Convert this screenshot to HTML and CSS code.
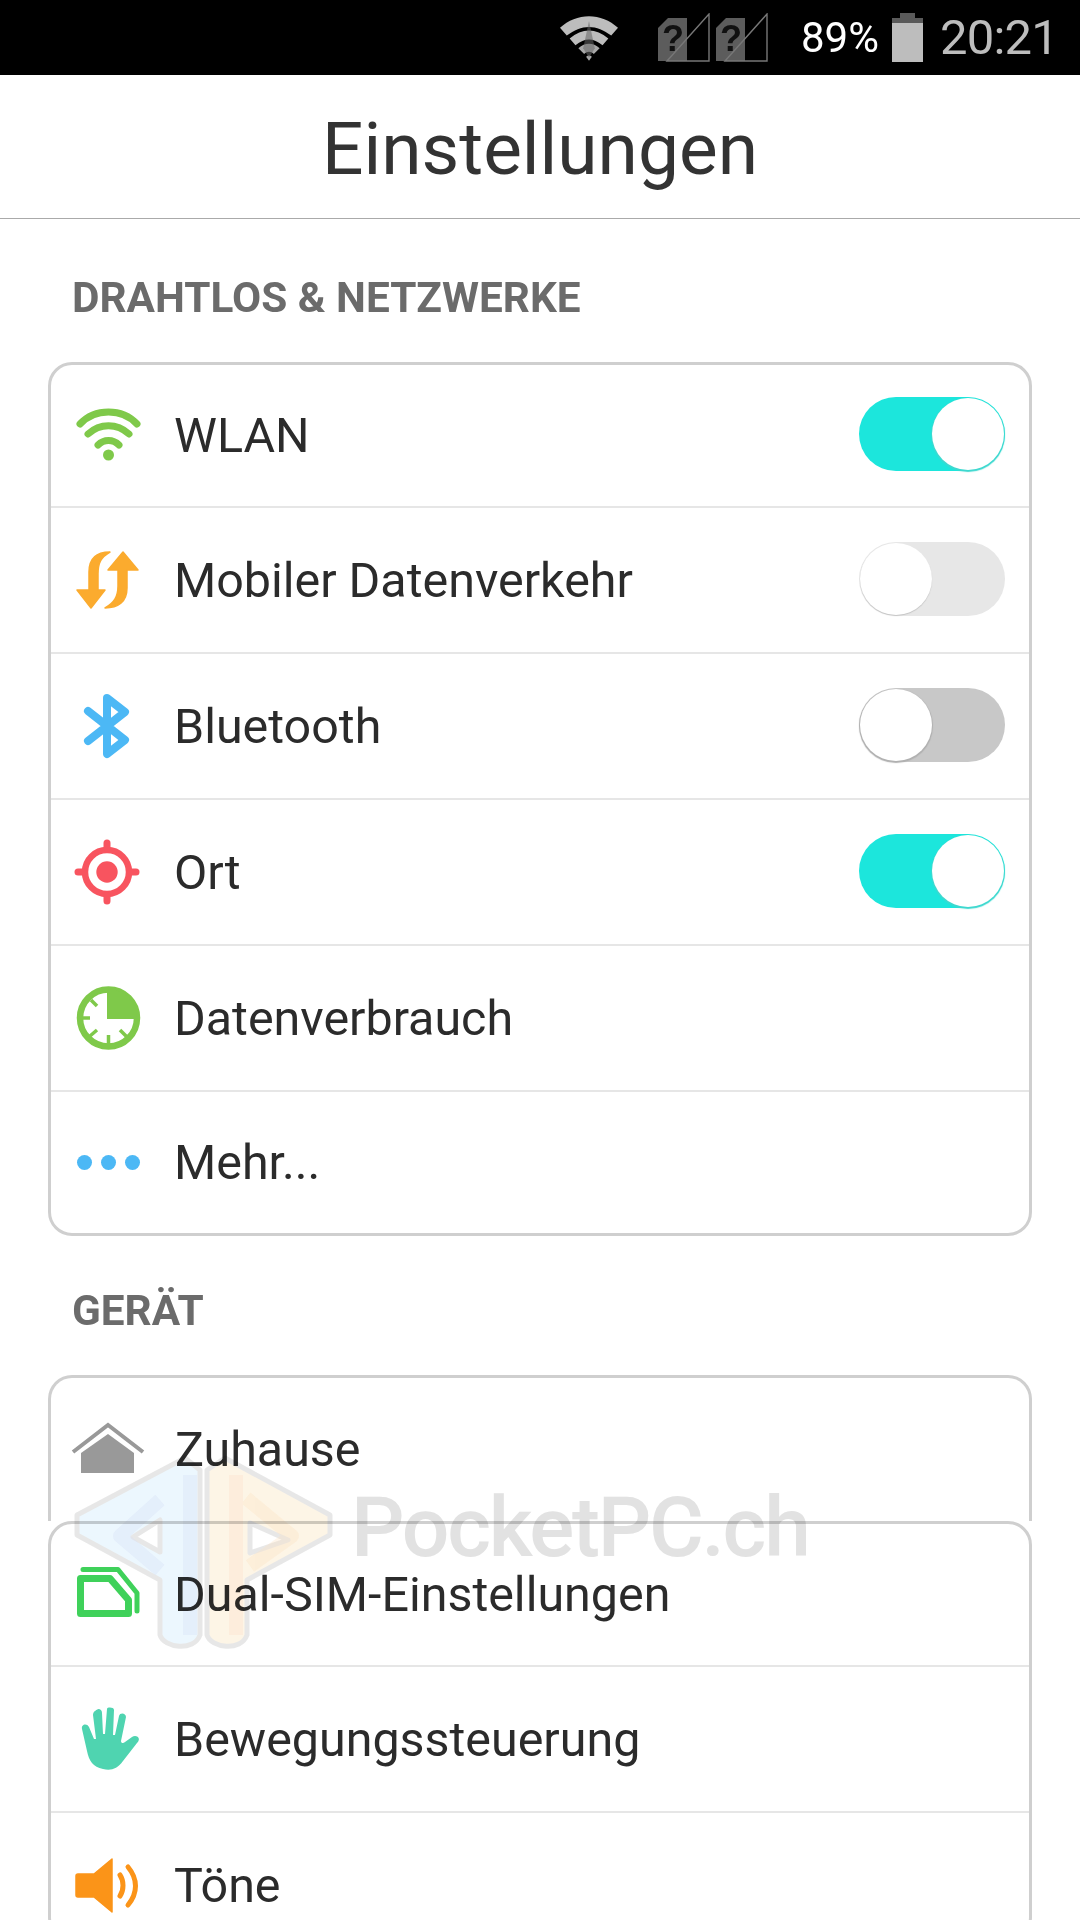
FILE: index.html
```html
<!DOCTYPE html>
<html lang="de">
<head>
    <meta charset="UTF-8">
    <meta name="viewport" content="width=device-width, initial-scale=1.0">
    <title>Einstellungen</title>
    <link rel="stylesheet" href="styles.css">
</head>
<body>
    <div class="statusBar">
        <svg class="statusWifi" viewBox="0 0 60 47">
            <path d="M0 13C17 -3 43 -3 60 13L53 21C38 9 22 9 7 21Z" fill="#bdbdbd"/>
            <path d="M10 24C23 13 37 13 50 24L44 31C34 23 26 23 16 31Z" fill="#bdbdbd"/>
            <path d="M19 34C26 28 34 28 41 34L35 40C32 37 28 37 25 40Z" fill="#a8a8a8"/>
            <path d="M27 43C29 41 31 41 33 43L30 47Z" fill="#a8a8a8"/>
            <path d="M30 6L36 34L30 44L24 34Z" fill="#666" opacity="0.55"/>
        </svg>
        <svg class="statusSim" viewBox="0 0 52 49">
            <path d="M10 5H29V48H0V15Z" fill="#5c5c5c"/>
            <path d="M9 48L51 1V48Z" fill="none" stroke="#777" stroke-width="1.4"/>
            <text x="4" y="38" class="simMark">?</text>
        </svg>
        <svg class="statusSim" viewBox="0 0 52 49">
            <path d="M10 5H29V48H0V15Z" fill="#5c5c5c"/>
            <path d="M9 48L51 1V48Z" fill="none" stroke="#777" stroke-width="1.4"/>
            <text x="4" y="38" class="simMark">?</text>
        </svg>
        <span class="statusPercent">89%</span>
        <svg class="statusBattery" viewBox="0 0 31 49">
            <path d="M8 0H23V5H31V49H0V5H8Z" fill="#bdbdbd"/>
            <path d="M8 0H23V5H31V10H0V5H8Z" fill="#5a5a5a"/>
        </svg>
        <span class="statusTime">20:21</span>
    </div>

    <div class="titleBar">Einstellungen</div>

    <div class="screen">
        <h2 class="sectionLabel">DRAHTLOS &amp; NETZWERKE</h2>
        <div class="card">
            <div class="row">
                <svg class="rowIcon" viewBox="0 0 64 64">
                    <g fill="none" stroke="#7fc94a" stroke-width="7" stroke-linecap="round">
                        <path d="M5 20C20 4 47 4 62 20"/>
                        <path d="M13 30C25 19 42 19 54 30"/>
                        <path d="M23 41C29 35 38 35 44 41"/>
                    </g>
                    <circle cx="33.5" cy="51" r="5.5" fill="#7fc94a"/>
                </svg>
                <span class="rowText">WLAN</span>
                <div class="toggle toggleOn"><div class="knob"></div></div>
            </div>
            <div class="row">
                <svg class="rowIcon" viewBox="0 0 64 64">
                    <g fill="#fbab2e" stroke="#fbab2e" stroke-width="1.5" stroke-linejoin="round">
                        <path d="M35 4C22 4 14 10 14 24V42H2L16 60L30 42H23V26C23 15 26 9 35 4Z"/>
                        <path d="M30 60C43 60 52 54 52 40V22H63L48 4L33 22H43V38C43 49 39 55 30 60Z"/>
                    </g>
                </svg>
                <span class="rowText">Mobiler Datenverkehr</span>
                <div class="toggle toggleLight"><div class="knob"></div></div>
            </div>
            <div class="row">
                <svg class="rowIcon" viewBox="0 0 64 64">
                    <path d="M13 17L50 46L32 60V4L50 18L13 47" fill="none" stroke="#4cb8f5" stroke-width="8" stroke-linecap="round" stroke-linejoin="round"/>
                </svg>
                <span class="rowText">Bluetooth</span>
                <div class="toggle toggleOff"><div class="knob"></div></div>
            </div>
            <div class="row">
                <svg class="rowIcon" viewBox="0 0 64 64">
                    <circle cx="32" cy="32" r="22" fill="none" stroke="#f8545f" stroke-width="6.5"/>
                    <circle cx="32" cy="32" r="10.7" fill="#f8545f"/>
                    <g stroke="#f8545f" stroke-width="7" stroke-linecap="round">
                        <path d="M32 3V8"/><path d="M32 56V61"/><path d="M3 32H8"/><path d="M56 32H61"/>
                    </g>
                </svg>
                <span class="rowText">Ort</span>
                <div class="toggle toggleOn"><div class="knob"></div></div>
            </div>
            <div class="row">
                <svg class="rowIcon" viewBox="0 0 64 64">
                    <circle cx="33.5" cy="32" r="28.5" fill="none" stroke="#7fc94a" stroke-width="6.5"/>
                    <path d="M32 3A29 29 0 0 1 62 33H32Z" fill="#7fc94a"/>
                    <g stroke="#7fc94a" stroke-width="3.5">
                        <path d="M33.5 49V60"/><path d="M16 14L22 20"/><path d="M52 51L45 44"/><path d="M15 50L22 44"/><path d="M6 32H15"/>
                    </g>
                </svg>
                <span class="rowText">Datenverbrauch</span>
            </div>
            <div class="row">
                <div class="rowDots"><i></i><i></i><i></i></div>
                <span class="rowText">Mehr...</span>
            </div>
        </div>

        <h2 class="sectionLabel">GERÄT</h2>
        <div class="card cardCut">
            <div class="row">
                <svg class="rowIcon iconWide" viewBox="0 0 72 64">
                    <path d="M1 34L36 7L71 34" fill="none" stroke="#999" stroke-width="4"/>
                    <path d="M36 16L62 35V55H9V35Z" fill="#999"/>
                </svg>
                <span class="rowText">Zuhause</span>
            </div>
        </div>
        <div class="card cardOver">
            <div class="row">
                <svg class="rowIcon" viewBox="0 0 64 64">
                    <path d="M8 6.5H43L62 30V48" fill="none" stroke="#3fd15a" stroke-width="5" stroke-linecap="round" stroke-linejoin="round"/>
                    <path d="M5.5 15.5H35L53.5 37V50.5H5.5Z" fill="#fff" stroke="#3fd15a" stroke-width="7" stroke-linejoin="round"/>
                </svg>
                <span class="rowText">Dual-SIM-Einstellungen</span>
            </div>
            <div class="row">
                <svg class="rowIcon" viewBox="0 0 64 64">
                    <path transform="translate(2 0)" d="M21 2C24 2 25 4 25 6L26 27H28L30 2C30 0 37 0 37 3L36 28H38L42 9C43 5 49 6 49 10L44 34C44 36 46 37 48 35L55 30C59 27 65 31 60 36L46 54C40 62 34 64 26 62C16 60 12 54 10 44L5 22C4 17 10 16 12 20L17 32H19L16 8C16 4 20 3 21 2Z" fill="#4fd4b0"/>
                </svg>
                <span class="rowText">Bewegungssteuerung</span>
            </div>
            <div class="row">
                <svg class="rowIcon" viewBox="0 0 64 64">
                    <path d="M37 6V59L19 44H3C2 44 1 43 1 42V23C1 22 2 21 3 21H19Z" fill="#fb9418" stroke="#fb9418" stroke-width="1.5" stroke-linejoin="round"/>
                    <path d="M45 22C49 28 49 37 45 43M53 14C63 26 63 40 53 52" fill="none" stroke="#fb9418" stroke-width="5" stroke-linecap="round"/>
                </svg>
                <span class="rowText">Töne</span>
            </div>
        </div>
    </div>

    <!-- watermark lies over the rows -->
    <div class="watermark">
        <svg class="watermarkLogo" viewBox="0 0 300 230">
            <g stroke="#e2e2e2" stroke-width="5" stroke-linejoin="round" fill-rule="evenodd" opacity="0.8">
                <path d="M125 28L17 85V105L100 150V205C104 218 134 222 140 205V40ZM73 107L100 90V122Z" fill="#e8f6fe"/>
                <path d="M165 28L270 85V105L187 150V205C181 222 151 218 147 205V40ZM190 93L228 110L190 123Z" fill="#fdf3e0"/>
            </g>
            <g fill="none" stroke-width="14" stroke-linejoin="round" opacity="0.35">
                <path d="M100 70L60 106L100 140" stroke="#d5def5"/>
                <path d="M186 68L232 106L190 136" stroke="#fbe3c2"/>
                <path d="M130 45V205" stroke="#d5def5"/>
                <path d="M176 45V205" stroke="#fbdcc8"/>
            </g>
        </svg>
        <span class="watermarkText">PocketPC.ch</span>
    </div>
</body>
</html>
```

FILE: styles.css
```css
*{
    box-sizing: border-box;
}

body{
    margin:0;
    height:1920px;
    overflow:hidden;
    position:relative;
    background:#fff;
    font-family:Roboto, "Liberation Sans", sans-serif;
    color:#2b2b2b;
}

.statusBar{
    height:75px;
    background:#000;
    display:flex;
    align-items:center;
    justify-content:flex-end;
    padding:0 22px 0 0;
}

.statusWifi{
    width:58px;
    height:46px;
    margin-right:40px;
    margin-bottom:0;
}

.statusSim{
    width:52px;
    height:49px;
    margin-right:6px;
    margin-bottom:1px;
}

.simMark{
    font-family:"Liberation Sans", sans-serif;
    font-size:36px;
    font-weight:700;
    fill:#111;
}

.statusPercent{
    color:#fff;
    font-size:42px;
    margin-left:27px;
    margin-right:13px;
}

.statusBattery{
    width:31px;
    height:49px;
    margin-bottom:1px;
    margin-right:17px;
}

.statusTime{
    color:#bdbdbd;
    font-size:49px;
    letter-spacing:-0.8px;
}

.titleBar{
    height:144px;
    border-bottom:1px solid #aaa;
    padding-top:4px;
    display:flex;
    align-items:center;
    justify-content:center;
    font-size:73px;
    color:#333;
}

.screen{
    padding:4px 48px 0;
}

.sectionLabel{
    margin:0;
    height:139px;
    padding:52px 0 0 24px;
    font-size:42.3px;
    line-height:46px;
    font-weight:700;
    color:#6b6b6b;
}

.card{
    border:3px solid #cfcfcf;
    border-radius:24px;
    background:#fff;
    overflow:hidden;
}

.cardCut{
    height:146px;
    border-bottom:none;
    border-bottom-left-radius:0;
    border-bottom-right-radius:0;
}

.cardOver{
    height:420px;
}

.row{
    height:146px;
    display:flex;
    align-items:center;
    border-top:2px solid #e6e6e6;
    padding:0 24px;
}

.row:first-child{
    height:141px;
    border-top:none;
}

.row:last-child{
    height:143px;
}

.cardOver .row:last-child{
    height:146px;
}

.rowIcon{
    width:64px;
    height:64px;
    flex:none;
    overflow:visible;
}

.iconWide{
    width:72px;
    margin:0 -4px 0 -3px;
}

.rowDots{
    width:63px;
    margin:0 -1px 0 2px;
    display:flex;
    justify-content:space-between;
    flex:none;
}

.rowDots i{
    width:15px;
    height:15px;
    border-radius:50%;
    background:#4cb8f5;
}

.rowText{
    margin-left:35px;
    font-size:48.4px;
    flex:1;
}

.toggle{
    width:146px;
    height:74px;
    margin-bottom:3px;
    border-radius:37px;
    display:flex;
    align-items:center;
    padding:1px;
}

.knob{
    width:72px;
    height:72px;
    border-radius:50%;
    background:#fff;
}

.toggleOn{
    background:#1ce6dc;
    justify-content:flex-end;
}

.toggleOn .knob{
    box-shadow:0 1px 1px 1px #3fd8cf;
}

.toggleLight{
    background:#e7e7e7;
}

.toggleLight .knob{
    box-shadow:0 1px 1px 0 #c4c4c4;
}

.toggleOff{
    background:#c8c8c8;
}

.toggleOff .knob{
    box-shadow:0 1px 1px 1px #b0b0b0;
}

.watermark{
    position:absolute;
    left:60px;
    top:1430px;
    display:flex;
    align-items:center;
    pointer-events:none;
    mix-blend-mode:multiply;
}

.watermarkLogo{
    width:300px;
    height:230px;
    flex:none;
}

.watermarkText{
    margin-left:-9px;
    margin-bottom:34px;
    font-size:84px;
    line-height:0.95;
    font-weight:500;
    letter-spacing:-2.3px;
    color:#e2e2e2;
}
```
